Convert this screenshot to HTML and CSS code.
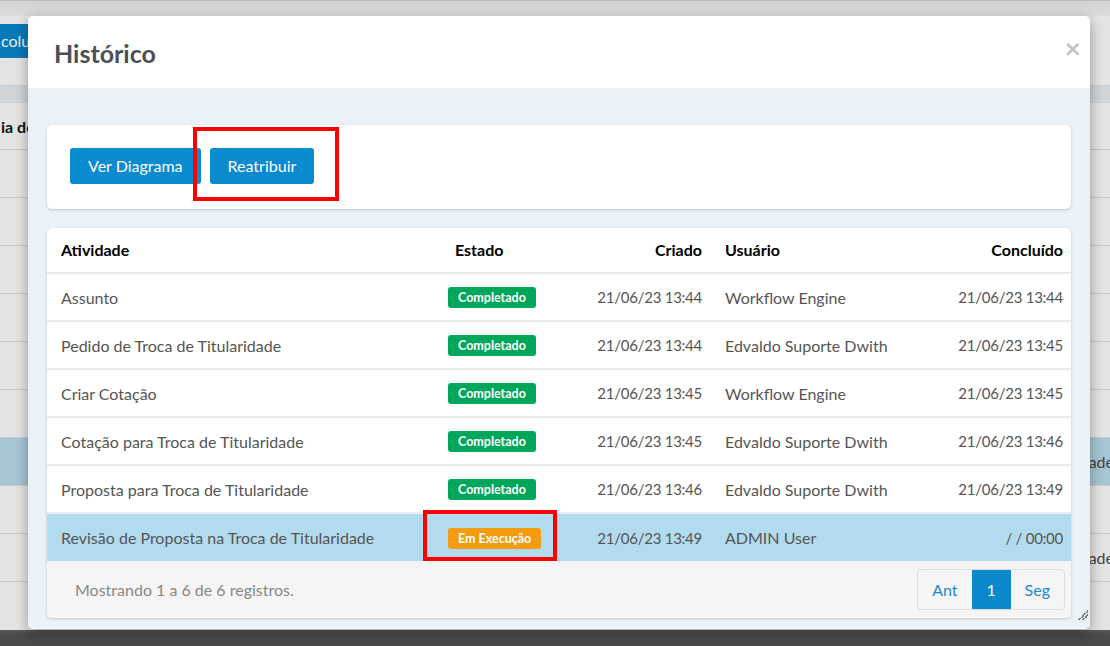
FILE: index.html
```html
<!DOCTYPE html>
<html lang="pt">
<head>
<meta charset="utf-8">
<title>Histórico</title>
<link rel="stylesheet" href="styles.css">
</head>
<body>
<div class="page">
  <div class="page-main">
    <div class="topbar"></div>
    <div class="toolbar"><span class="bg-btn">colunas</span></div>
    <div class="bg-strip"></div>
    <div class="bg-head"><span class="bg-head-text">ia de</span></div>
    <div class="bg-row"></div>
    <div class="bg-row"></div>
    <div class="bg-row"></div>
    <div class="bg-row"></div>
    <div class="bg-row"></div>
    <div class="bg-row"></div>
    <div class="bg-row bg-row-hl"><span class="bg-cell">Titularidade</span></div>
    <div class="bg-row"></div>
    <div class="bg-row"><span class="bg-cell">Titularidade</span></div>
  </div>
  <div class="page-footer"></div>
</div>

<div class="modal">
  <div class="modal-header">
    <h4 class="modal-title">Histórico</h4>
    <span class="modal-close">×</span>
  </div>
  <div class="modal-body">
    <div class="card card-actions">
      <button class="btn">Ver Diagrama</button>
      <button class="btn">Reatribuir</button>
    </div>
    <div class="card card-table">
      <table class="grid">
        <colgroup>
          <col class="c1"><col class="c2"><col class="c3"><col class="c4"><col class="c5">
        </colgroup>
        <thead>
          <tr>
            <th class="t-left">Atividade</th>
            <th class="t-estado">Estado</th>
            <th class="t-right">Criado</th>
            <th class="t-user">Usuário</th>
            <th class="t-right">Concluído</th>
          </tr>
        </thead>
        <tbody>
          <tr>
            <td class="t-left">Assunto</td>
            <td class="t-badge"><span class="badge badge-ok">Completado</span></td>
            <td class="t-right t-date">21/06/23 13:44</td>
            <td class="t-user">Workflow Engine</td>
            <td class="t-right t-date">21/06/23 13:44</td>
          </tr>
          <tr>
            <td class="t-left">Pedido de Troca de Titularidade</td>
            <td class="t-badge"><span class="badge badge-ok">Completado</span></td>
            <td class="t-right t-date">21/06/23 13:44</td>
            <td class="t-user">Edvaldo Suporte Dwith</td>
            <td class="t-right t-date">21/06/23 13:45</td>
          </tr>
          <tr>
            <td class="t-left">Criar Cotação</td>
            <td class="t-badge"><span class="badge badge-ok">Completado</span></td>
            <td class="t-right t-date">21/06/23 13:45</td>
            <td class="t-user">Workflow Engine</td>
            <td class="t-right t-date">21/06/23 13:45</td>
          </tr>
          <tr>
            <td class="t-left">Cotação para Troca de Titularidade</td>
            <td class="t-badge"><span class="badge badge-ok">Completado</span></td>
            <td class="t-right t-date">21/06/23 13:45</td>
            <td class="t-user">Edvaldo Suporte Dwith</td>
            <td class="t-right t-date">21/06/23 13:46</td>
          </tr>
          <tr>
            <td class="t-left">Proposta para Troca de Titularidade</td>
            <td class="t-badge"><span class="badge badge-ok">Completado</span></td>
            <td class="t-right t-date">21/06/23 13:46</td>
            <td class="t-user">Edvaldo Suporte Dwith</td>
            <td class="t-right t-date">21/06/23 13:49</td>
          </tr>
          <tr class="row-active">
            <td class="t-left">Revisão de Proposta na Troca de Titularidade</td>
            <td class="t-badge"><span class="badge badge-run">Em Execução</span></td>
            <td class="t-right t-date">21/06/23 13:49</td>
            <td class="t-user">ADMIN User</td>
            <td class="t-right t-date">/ / 00:00</td>
          </tr>
        </tbody>
      </table>
      <div class="table-footer">
        <span class="records">Mostrando 1 a 6 de 6 registros.</span>
        <div class="pager">
          <span class="pg">Ant</span>
          <span class="pg pg-active">1</span>
          <span class="pg">Seg</span>
        </div>
      </div>
    </div>
  </div>
  <span class="resize"></span>
  <span class="mark mark-1"></span>
  <span class="mark mark-2"></span>
</div>
</body>
</html>
```

FILE: styles.css
```css
* { box-sizing: border-box; }
html, body { margin: 0; padding: 0; }
body {
  width: 1110px;
  height: 646px;
  overflow: hidden;
  font-family: Lato, "Liberation Sans", sans-serif;
  position: relative;
  background: #e3e3e3;
}

/* background page (dimmed) */
.page { height: 646px; display: flex; flex-direction: column; }
.page-main { flex: 1; background: #e4e4e4; overflow: hidden; }
.topbar {
  height: 16px;
  background: linear-gradient(#d2d2d2, #dcdcdc);
  border-top: 1px solid #bdbdbd;
}
.toolbar { height: 69px; padding-top: 8px; }
.bg-btn {
  display: inline-block;
  height: 34px;
  line-height: 34px;
  padding: 0 12px 0 1px;
  background: #0a79b8;
  color: #e8eef2;
  font-size: 16px;
}
.bg-strip { height: 18px; background: #cfd5d9; border-top: 1px solid #c9cfd3; }
.bg-head {
  height: 47px;
  border-bottom: 1px solid #c6c6c6;
  display: flex;
  align-items: center;
}
.bg-head-text { margin-left: 1px; font-weight: 700; color: #111; font-size: 16px; }
.bg-row {
  height: 48px;
  border-bottom: 1px solid #c9c9c9;
  display: flex;
  align-items: center;
  justify-content: flex-end;
}
.bg-row-hl { background: #a7c5d4; }
.bg-cell { font-size: 16px; color: #444; margin-right: -4px; }
.page-footer {
  height: 16px;
  background: linear-gradient(#5a5b5c, #48494a 30%, #4a4b4c);
}

/* modal */
.modal {
  position: absolute;
  left: 28px;
  top: 16px;
  width: 1062px;
  height: 613px;
  background: #fff;
  border-radius: 5px;
  box-shadow: 0 4px 14px rgba(0,0,0,0.35);
  display: flex;
  flex-direction: column;
  overflow: hidden;
}
.modal-header {
  height: 72px;
  flex: none;
  display: flex;
  align-items: center;
  justify-content: space-between;
  padding: 0 8px 0 26px;
}
.modal-title {
  margin: 0;
  font-size: 25px;
  font-weight: 700;
  color: #4b5056;
  padding-top: 2px;
}
.modal-close {
  font-size: 22px;
  font-weight: 700;
  color: #c2c2c2;
  font-family: "DejaVu Sans", sans-serif;
  margin-top: -8px;
}
.modal-body {
  flex: 1;
  background: #eaf2f8;
  padding: 37px 19px 10px 19px;
  display: flex;
  flex-direction: column;
  gap: 19px;
  margin: 0 0 1px 0;
}
.card {
  background: #fff;
  border-radius: 5px;
  box-shadow: 0 1px 3px rgba(0,0,0,0.18);
}
.card-actions {
  height: 84px;
  padding: 23px 23px;
  display: flex;
  gap: 9px;
}
.btn {
  height: 36px;
  padding: 0 18px;
  border: none;
  border-radius: 3px;
  background: #0a8acf;
  color: #fff;
  font-family: Lato, "Liberation Sans", sans-serif;
  font-size: 16px;
  padding-bottom: 1px;
}
.card-table { overflow: hidden; flex: 1; display: flex; flex-direction: column; }

.grid {
  width: 100%;
  border-collapse: collapse;
  table-layout: fixed;
  font-size: 16px;
}
.c1 { width: 393px; }
.c2 { width: 120px; }
.c3 { width: 150px; }
.c4 { width: 170px; }
.c5 { width: auto; }
.grid th {
  height: 45px;
  font-weight: 700;
  color: #000;
  border-bottom: 2px solid #e9e9e9;
  padding-bottom: 3px;
}
.grid td {
  height: 48px;
  color: #555;
  border-bottom: 2px solid #ebebeb;
  padding-bottom: 1px;
}
.grid th, .grid td { padding-left: 8px; padding-right: 8px; white-space: nowrap; }
.t-left { text-align: left; padding-left: 14px !important; }
.grid .t-estado { text-align: left; padding-left: 15px; }
.t-badge { text-align: left; }
.t-right { text-align: right; }
.grid .t-date { font-size: 15px; letter-spacing: -0.25px; }
.t-user { text-align: left; padding-left: 15px !important; }
.row-active td { background: #b3dbef; border-bottom: none; }

.badge {
  display: inline-block;
  height: 21px;
  line-height: 21px;
  padding: 0 10px;
  border-radius: 3px;
  color: #fff;
  font-size: 12.5px;
  font-weight: 700;
  vertical-align: middle;
}
.badge-ok { background: #00a65a; }
.badge-run { background: #f39c12; }

.table-footer {
  flex: 1;
  background: #f5f5f5;
  display: flex;
  align-items: center;
  justify-content: space-between;
  padding: 0 6px 0 28px;
}
.records { color: #888; font-size: 16px; }
.pager {
  display: flex;
  height: 41px;
  border: 1px solid #dcdcdc;
  border-radius: 4px;
  overflow: hidden;
  background: #f5f5f5;
}
.pg {
  display: flex;
  align-items: center;
  justify-content: center;
  padding: 0 14px;
  color: #1f87cf;
  font-size: 16px;
}
.pg-active { background: #0a88cc; color: #fff; width: 39px; }

.resize {
  position: absolute;
  right: 2px;
  bottom: 9px;
  width: 10px;
  height: 10px;
  background: linear-gradient(135deg, transparent 50%, #777 50%, #777 60%, transparent 60%, transparent 70%, #777 70%, #777 80%, transparent 80%);
}
.mark {
  position: absolute;
  border: 4px solid #ff0000;
}
.mark-1 { left: 165px; top: 111px; width: 146px; height: 74px; }
.mark-2 { left: 395px; top: 494px; width: 134px; height: 51px; }
```
